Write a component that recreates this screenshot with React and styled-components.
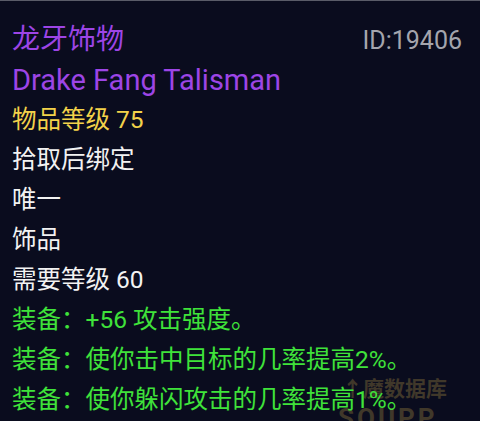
import React from "react";
import styled, { createGlobalStyle } from "styled-components";

const Global = createGlobalStyle`
  html, body { margin: 0; padding: 0; background: #0a0c1e; }
  body { width: 480px; height: 421px; overflow: hidden; }
`;

const Card = styled.div`
  position: relative;
  width: 480px;
  height: 421px;
  box-sizing: border-box;
  background: #0a0c1e;
  border-top: 1px solid #5a5c68;
  padding: 19px 12px 0 12px;
  font-family: Roboto, "Noto Sans CJK SC", sans-serif;
  overflow: hidden;
`;

const Content = styled.div`
  position: relative;
  z-index: 1;
`;

const Header = styled.div`
  display: flex;
  justify-content: space-between;
  align-items: baseline;
  height: 40px;
`;

const Title = styled.div`
  font-size: 28px;
  line-height: 40px;
  color: ${(p) => p.color};
`;

const Id = styled.div`
  font-size: 25px;
  color: #a4a5ad;
  padding-right: 6px;
`;

const Line = styled.div`
  font-size: ${(p) => p.size || 24.5}px;
  line-height: 40px;
  color: ${(p) => p.color};
  white-space: nowrap;
`;

const Watermark = styled.div`
  position: absolute;
  z-index: 0;
  left: 338px;
  top: 374px;
  display: flex;
  flex-direction: column;
  align-items: flex-start;
  color: #40382a;
  font-weight: 700;
  pointer-events: none;
`;

const WmTop = styled.div`
  font-size: 21px;
  line-height: 28px;
  padding-left: 4px;
`;

const WmBottom = styled.div`
  font-size: 26px;
  line-height: 30px;
  letter-spacing: 3px;
`;

const PURPLE = "#9d45e6";
const YELLOW = "#f3d24a";
const WHITE = "#f2f2f2";
const GREEN = "#3fe23a";

export default function App() {
  return (
    <>
      <Global />
      <Card>
        <Watermark>
          <WmTop>↑魔数据库</WmTop>
          <WmBottom>SOUPP</WmBottom>
        </Watermark>
        <Content>
          <Header>
            <Title color={PURPLE}>龙牙饰物</Title>
            <Id>ID:19406</Id>
          </Header>
          <Line size={29} color={PURPLE}>Drake Fang Talisman</Line>
          <Line color={YELLOW}>物品等级 75</Line>
          <Line color={WHITE}>拾取后绑定</Line>
          <Line color={WHITE}>唯一</Line>
          <Line color={WHITE}>饰品</Line>
          <Line color={WHITE}>需要等级 60</Line>
          <Line color={GREEN}>装备：+56 攻击强度。</Line>
          <Line color={GREEN}>装备：使你击中目标的几率提高2%。</Line>
          <Line color={GREEN}>装备：使你躲闪攻击的几率提高1%。</Line>
        </Content>
      </Card>
    </>
  );
}
